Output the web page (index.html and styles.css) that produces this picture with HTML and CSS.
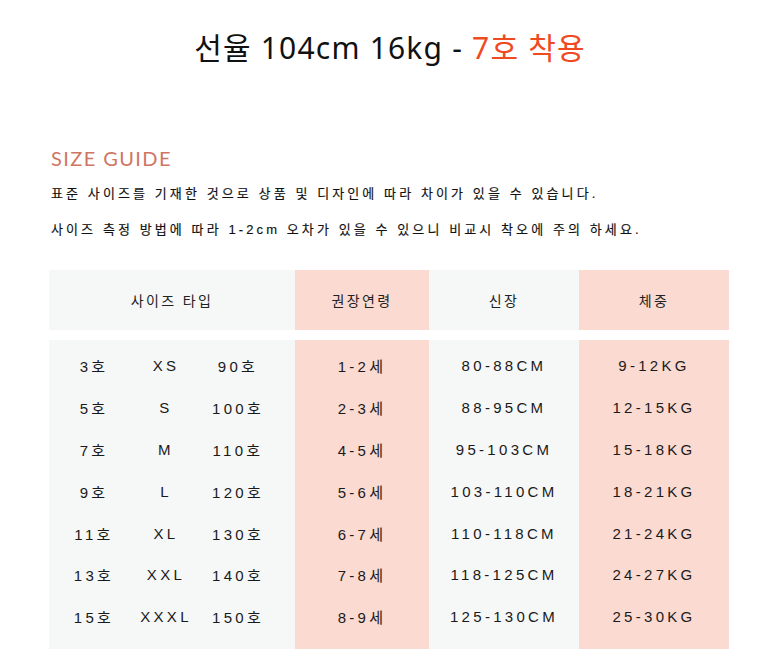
FILE: index.html
```html
<!DOCTYPE html>
<html lang="ko">
<head>
<meta charset="utf-8">
<link rel="stylesheet" href="styles.css">
</head>
<body>
<div class="page">
  <h1 class="title">선율 104cm 16kg - <span class="accent">7호 착용</span></h1>

  <section class="guide">
    <h2 class="guide-title">SIZE GUIDE</h2>
    <p class="desc">표준 사이즈를 기재한 것으로 상품 및 디자인에 따라 차이가 있을 수 있습니다.</p>
    <p class="desc">사이즈 측정 방법에 따라 1-2cm 오차가 있을 수 있으니 비교시 착오에 주의 하세요.</p>

    <div class="table">
      <div class="head">
        <div class="hcell gray">사이즈 타입</div>
        <div class="hcell pink">권장연령</div>
        <div class="hcell gray">신장</div>
        <div class="hcell pink">체중</div>
      </div>
      <div class="body">
        <div class="col gray">
          <div class="row sub"><span>3호</span><span>XS</span><span>90호</span></div>
          <div class="row sub"><span>5호</span><span>S</span><span>100호</span></div>
          <div class="row sub"><span>7호</span><span>M</span><span>110호</span></div>
          <div class="row sub"><span>9호</span><span>L</span><span>120호</span></div>
          <div class="row sub"><span>11호</span><span>XL</span><span>130호</span></div>
          <div class="row sub"><span>13호</span><span>XXL</span><span>140호</span></div>
          <div class="row sub"><span>15호</span><span>XXXL</span><span>150호</span></div>
        </div>
        <div class="col pink">
          <div class="row">1-2세</div>
          <div class="row">2-3세</div>
          <div class="row">4-5세</div>
          <div class="row">5-6세</div>
          <div class="row">6-7세</div>
          <div class="row">7-8세</div>
          <div class="row">8-9세</div>
        </div>
        <div class="col gray">
          <div class="row">80-88CM</div>
          <div class="row">88-95CM</div>
          <div class="row">95-103CM</div>
          <div class="row">103-110CM</div>
          <div class="row">110-118CM</div>
          <div class="row">118-125CM</div>
          <div class="row">125-130CM</div>
        </div>
        <div class="col pink">
          <div class="row">9-12KG</div>
          <div class="row">12-15KG</div>
          <div class="row">15-18KG</div>
          <div class="row">18-21KG</div>
          <div class="row">21-24KG</div>
          <div class="row">24-27KG</div>
          <div class="row">25-30KG</div>
        </div>
      </div>
    </div>
  </section>
</div>
</body>
</html>
```

FILE: styles.css
```css
* { box-sizing: border-box; }
html, body { margin: 0; padding: 0; background: #ffffff; }
body {
  font-family: "Noto Sans CJK KR", "Noto Sans", sans-serif;
  color: #1a1a1a;
}
.page {
  width: 780px;
  padding-top: 27px;
}
.title {
  margin: 0;
  text-align: center;
  font-family: "Noto Sans", "Noto Sans CJK KR", sans-serif;
  font-size: 30px;
  font-weight: 400;
  line-height: 42px;
  color: #111;
  letter-spacing: 1.2px;
}
.accent { color: #f04a23; }

.guide {
  padding: 0 51px 0 49px;
  margin-top: 75px;
}
.guide-title {
  margin: 0 0 0 2px;
  font-family: "Lato", "Open Sans", sans-serif;
  font-weight: 400;
  font-size: 20px;
  line-height: 28px;
  letter-spacing: 1.4px;
  color: #cf7563;
}
.desc {
  margin: 0 0 0 2px;
  font-family: "Liberation Sans", "Noto Sans CJK KR", sans-serif;
  font-size: 13px;
  font-weight: 400;
  line-height: 36px;
  letter-spacing: 3.1px;
  color: #111;
  -webkit-text-stroke: 0.15px #111;
}
.desc:first-of-type { margin-top: 4px; }

.table {
  margin-top: 22px;
  width: 680px;
}
.head, .body {
  display: grid;
  grid-template-columns: 246px 134px 150px 150px;
}
.body { margin-top: 10px; }
.gray { background: #f6f7f7; }
.pink { background: #fbdad1; }
.hcell {
  height: 60px;
  display: flex;
  align-items: center;
  justify-content: center;
  font-size: 14px;
  letter-spacing: 2.4px;
  color: #222;
}
.col {
  height: 309px;
  padding-top: 5px;
}
.row {
  height: 41.8px;
  display: flex;
  align-items: center;
  justify-content: center;
  font-family: "Liberation Sans", "Noto Sans CJK KR", sans-serif;
  font-size: 15px;
  letter-spacing: 3.3px;
  color: #1a1a1a;
}
.row.sub {
  display: grid;
  grid-template-columns: 72px 72px 72px;
  justify-content: start;
  padding-left: 9px;
}
.row.sub span { text-align: center; }
```
